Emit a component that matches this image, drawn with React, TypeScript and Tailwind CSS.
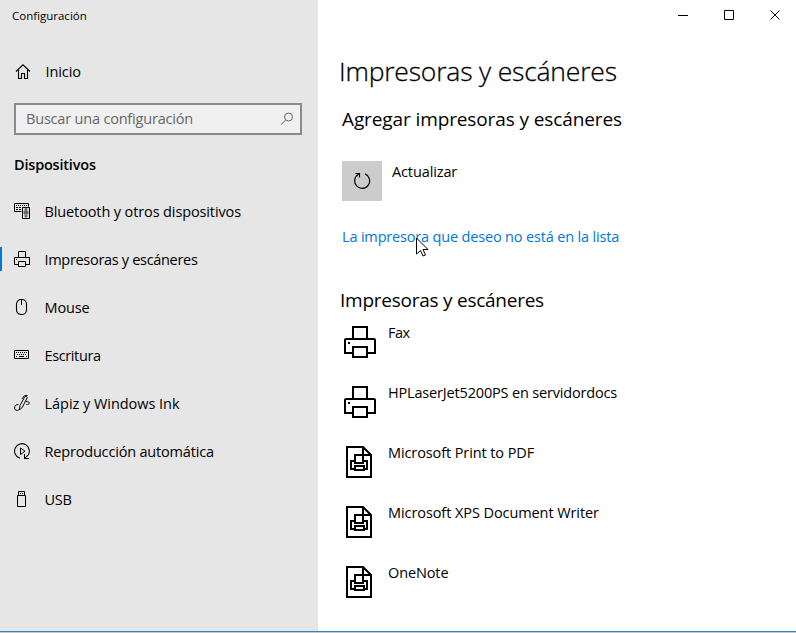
import type { ReactNode } from "react";

type IconProps = { children: ReactNode; w?: number; h?: number };

function Glyph({ children, w = 16, h = 16 }: IconProps) {
  return (
    <svg width={w} height={h} viewBox={`0 0 ${w} ${h}`} fill="none" stroke="#000" className="block shrink-0">
      {children}
    </svg>
  );
}

const HomeIcon = () => (
  <Glyph>
    <path d="M1 7.500 L8 .8 L15 7.500 M3.500 6v8.500h3V9.500h3v5h3V6" strokeWidth="1.1" />
  </Glyph>
);

const DevicesIcon = () => (
  <Glyph>
    <path d="M7.500 8.500H.5V.5h14v3" />
    <path d="M2 2.500h12" strokeDasharray="1 1" />
    <path d="M2 4.500h6M2 6.500h5" strokeDasharray="2 1" />
    <path d="M8.500 4.500h7v11h-7z" />
    <path d="M11 5.500h2v2h-2zM10 8h4v3h-4zM11 12h2v2h-2z" fill="#555" stroke="#777" />
  </Glyph>
);

const PrinterIcon = () => (
  <Glyph>
    <path d="M4.500 6V.5h7V6M4.500 13.500H.5V6.500h15v7h-4M4.500 10.500h7v5h-7z" />
    <path d="M2 8.500h1" />
  </Glyph>
);

const MouseIcon = () => (
  <Glyph>
    <rect x="2.500" y=".5" width="10" height="15" rx="4.500" strokeWidth="1.100" />
    <path d="M7.500 0v6" />
  </Glyph>
);

const KeyboardIcon = () => (
  <Glyph>
    <path d="M.5 3.500h14v8H.5z" />
    <path d="M2 5.500h12M3 7.500h10" strokeDasharray="1 1" />
    <path d="M2 9.500h1M5 9.500h5M12 9.500h1" />
  </Glyph>
);

const PenIcon = () => (
  <Glyph>
    <path
      d="M5.500 15l.5-4.500L10.500 2.200c.8-1.500 3.200-.8 2.500.8L8.500 12zM8 3.800L10.500 .6h3M4.500 9.500C1.500 9.500.6 11 .6 13c0 1.500 1 2.400 2.400 2.400 1.200 0 2-.7 2.500-1.500M12 6.500c2 0 3.400.5 3.400 1.500s-1.500 1.500-3 1.500"
      strokeWidth="1"
    />
  </Glyph>
);

const AutoplayIcon = () => (
  <Glyph>
    <path d="M6 15.200A7.400 7.400 0 1 1 13.500 13M10.500 11v4.500H15M10.500 15.500l3-3" strokeWidth="1.050" />
    <path d="M6.500 5v6.500L11 8.200z" strokeWidth="1" />
  </Glyph>
);

const UsbIcon = () => (
  <Glyph>
    <path d="M4.500 4V.5h6V4M3.500 4.500h8v11h-8z" />
    <path d="M6 2.500h1M8 2.500h1" />
  </Glyph>
);

const LargePrinter = () => (
  <Glyph w={32} h={32}>
    <g strokeWidth="2">
      <path d="M9 12V1h14v11M9 27H1V14q0-1 1-1h28q1 0 1 1v13h-8M9 21h14v10H9z" />
      <path d="M4 17h2" />
    </g>
  </Glyph>
);

const DocumentPrinter = () => (
  <Glyph w={32} h={32}>
    <g strokeWidth="2">
      <path d="M3 1h16l8 8v22H3zM19 1v8h8" />
      <path d="M11 9h8v8h-8zM11 15H7v8h4M19 15h4v8h-4M11 20h9v4h-9z" />
    </g>
  </Glyph>
);

const navItems = [
  { label: "Bluetooth y otros dispositivos", icon: DevicesIcon, spacing: "tracking-[-0.12px]" },
  { label: "Impresoras y escáneres", icon: PrinterIcon, spacing: "tracking-[-0.31px]", active: true },
  { label: "Mouse", icon: MouseIcon, spacing: "tracking-[-0.15px]" },
  { label: "Escritura", icon: KeyboardIcon, spacing: "tracking-[-0.38px]" },
  { label: "Lápiz y Windows Ink", icon: PenIcon, spacing: "tracking-[-0.04px]" },
  { label: "Reproducción automática", icon: AutoplayIcon, spacing: "tracking-[-0.18px]" },
  { label: "USB", icon: UsbIcon, spacing: "tracking-[-0.3px]" },
];

const printers = [
  { label: "Fax", icon: LargePrinter, spacing: "tracking-[-0.5px]" },
  { label: "HPLaserJet5200PS en servidordocs", icon: LargePrinter, spacing: "tracking-[-0.17px]" },
  { label: "Microsoft Print to PDF", icon: DocumentPrinter, spacing: "tracking-[-0.1px]" },
  { label: "Microsoft XPS Document Writer", icon: DocumentPrinter, spacing: "tracking-[-0.08px]" },
  { label: "OneNote", icon: DocumentPrinter, spacing: "tracking-[-0.12px]" },
];

function Sidebar() {
  return (
    <aside className="flex w-[318px] shrink-0 flex-col bg-[#e6e6e6]">
      <div className="h-8 pl-3 text-[11.5px] leading-8">Configuración</div>
      <div className="mt-4 flex h-12 items-center gap-[14.5px] pl-[15px]">
        <HomeIcon />
        <span className="tracking-[-0.1px]">Inicio</span>
      </div>
      <div className="mt-[7px] ml-3.5 flex h-8 w-[288px] items-center justify-between border-2 border-[#8a8a8a] bg-[#f0f0f0] pr-1.5 pl-2.5 text-[#666]">
        <span className="tracking-[-0.19px]">Buscar una configuración</span>
        <svg width="14" height="14" viewBox="0 0 14 14" fill="none" stroke="#666">
          <circle cx="8.500" cy="5" r="4" />
          <path d="M5.500 8L1 12.800" />
        </svg>
      </div>
      <h2 className="mt-[18px] pl-3.5 leading-6 font-semibold tracking-[-0.2px]">Dispositivos</h2>
      <nav className="mt-2.5">
        {navItems.map(({ label, icon: Icon, spacing, active }) => (
          <div key={label} className="flex h-12 items-center">
            <span className={active ? "h-6 w-0.5 bg-[#0078d7]" : "h-6 w-0.5"} />
            <span className="ml-3">
              <Icon />
            </span>
            <span className={`ml-[14.5px] pt-0.5 whitespace-nowrap ${spacing}`}>{label}</span>
          </div>
        ))}
      </nav>
    </aside>
  );
}

function WindowControls() {
  return (
    <div className="flex h-8 justify-end">
      <svg width="136" height="32" viewBox="0 0 136 32" fill="none" stroke="#000">
        <path d="M18 15.500h10M64.500 10.500h9v9h-9zM110.500 10.500l9 9M119.500 10.500l-9 9" />
      </svg>
    </div>
  );
}

export default function App() {
  return (
    <div className="flex h-[633px] w-[796px] flex-col overflow-hidden bg-white font-['Open_Sans','Noto_Sans',sans-serif] text-[14.5px] text-black">
      <div className="flex h-[631px]">
        <Sidebar />
        <main className="relative flex-1">
          <WindowControls />
          <h1 className="mt-[19px] pl-[21px] text-[26.5px] leading-10 font-light tracking-[-0.2px] [-webkit-text-stroke:0.3px_#000]">
            Impresoras y escáneres
          </h1>
          <h2 className="mt-[13px] pl-6 text-[19px] leading-[30px] tracking-[-0.11px]">Agregar impresoras y escáneres</h2>
          <div className="mt-[27px] flex h-10 gap-2.5 pl-6">
            <div className="flex size-10 items-center justify-center bg-[#ccc]">
              <svg width="18" height="18" viewBox="0 0 18 18" fill="none" stroke="#000" strokeWidth="1.200">
                <path d="M12 1.900A7.500 7.500 0 1 1 5.500 2.300M2.500 1.500h4v4" />
              </svg>
            </div>
            <span className="leading-[22px] tracking-[-0.12px]">Actualizar</span>
          </div>
          <a className="mt-[25px] block pl-6 leading-[22px] tracking-[-0.17px] text-[#0078d7]">
            La impresora que deseo no está en la lista
          </a>
          <svg className="absolute top-[237px] left-[98px]" width="13" height="21" viewBox="0 0 13 21" fill="#fff" stroke="#000">
            <path d="M.5 1v16l4-3.500 2.500 5.500 2.500-1-2.500-5.500h5z" />
          </svg>
          <h2 className="mt-[35px] pl-[22px] text-[19px] leading-[34px] tracking-[-0.25px]">Impresoras y escáneres</h2>
          <div className="mt-[9px] pl-[26px]">
            {printers.map(({ label, icon: Icon, spacing }) => (
              <div key={label} className="flex h-[60px] gap-3">
                <Icon />
                <span className={`-mt-1 leading-[22px] ${spacing}`}>{label}</span>
              </div>
            ))}
          </div>
        </main>
      </div>
      <div className="h-px bg-[#2b83cb]" />
      <div className="h-px bg-[#c8c8c8]" />
    </div>
  );
}
